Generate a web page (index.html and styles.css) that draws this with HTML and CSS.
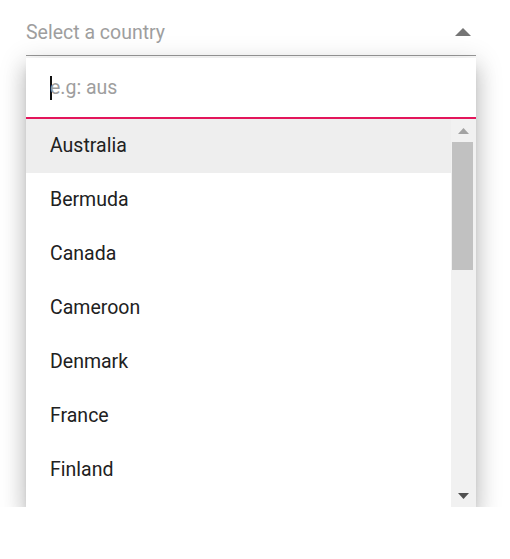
FILE: index.html
```html
<!DOCTYPE html>
<html lang="en">
<head>
    <meta charset="UTF-8">
    <meta name="viewport" content="width=device-width, initial-scale=1.0">
    <title>Country Select</title>
    <link rel="stylesheet" href="styles.css">
</head>
<body>

<div class="wrapper">
    <div class="select">
        <span class="select-text">Select a country</span>
        <svg class="caret" width="16" height="8" viewBox="0 0 16 8"><polygon points="0,8 8,0 16,8" fill="#757575"/></svg>
    </div>

    <div class="popup">
        <div class="search">
            <span class="cursor"></span>
            <span class="placeholder">e.g: aus</span>
        </div>
        <div class="body">
            <ul class="list">
                <li class="item hover">Australia</li>
                <li class="item">Bermuda</li>
                <li class="item">Canada</li>
                <li class="item">Cameroon</li>
                <li class="item">Denmark</li>
                <li class="item">France</li>
                <li class="item">Finland</li>
            </ul>
            <div class="scrollbar">
                <svg class="arrow" width="11" height="6" viewBox="0 0 11 6"><polygon points="0,6 5.5,0 11,6" fill="#a3a3a3"/></svg>
                <div class="track">
                    <div class="thumb"></div>
                </div>
                <svg class="arrow" width="11" height="6" viewBox="0 0 11 6"><polygon points="0,0 5.5,6 11,0" fill="#505050"/></svg>
            </div>
        </div>
    </div>
</div>

</body>
</html>
```

FILE: styles.css
```css
body {
    margin: 0;
    background-color: #fff;
    font-family: Roboto, "Liberation Sans", sans-serif;
}
.wrapper {
    width: 450px;
    margin-left: 26px;
    padding-top: 18px;
}
.select {
    display: flex;
    align-items: center;
    justify-content: space-between;
    height: 30px;
    padding-bottom: 7px;
    border-bottom: 1px solid #9a9a9a;
}
.select-text {
    font-size: 19.5px;
    color: #9e9e9e;
    line-height: 30px;
}
.caret {
    margin-right: 5px;
    margin-top: -2px;
}
.popup {
    margin-top: 2px;
    background-color: #fff;
    box-shadow: 0 7px 8px -4px rgba(0,0,0,.2), 0 13px 19px 2px rgba(0,0,0,.14), 0 5px 24px 4px rgba(0,0,0,.12);
}
.search {
    display: flex;
    align-items: center;
    padding-left: 24px;
    border-bottom: 2px solid #e3165b;
    box-sizing: border-box;
    height: 61px;
}
.cursor {
    width: 2px;
    height: 24px;
    background-color: #111;
    margin-right: -2px;
}
.placeholder {
    font-size: 19.5px;
    color: #9e9e9e;
}
.body {
    display: flex;
    height: 388px;
}
.list {
    flex: 1;
    margin: 0;
    padding: 0;
    list-style: none;
    overflow: hidden;
}
.item {
    height: 54px;
    line-height: 54px;
    padding-left: 24px;
    font-size: 19.5px;
    color: #212121;
}
.item.hover {
    background-color: #eeeeee;
}
.scrollbar {
    width: 25px;
    background-color: #f1f1f1;
    display: flex;
    flex-direction: column;
    align-items: center;
}
.arrow {
    margin: 9px 0 8px;
}
.track {
    flex: 1;
    width: 100%;
}
.thumb {
    width: 21px;
    height: 128px;
    margin-left: 1px;
    background-color: #c1c1c1;
}
```
